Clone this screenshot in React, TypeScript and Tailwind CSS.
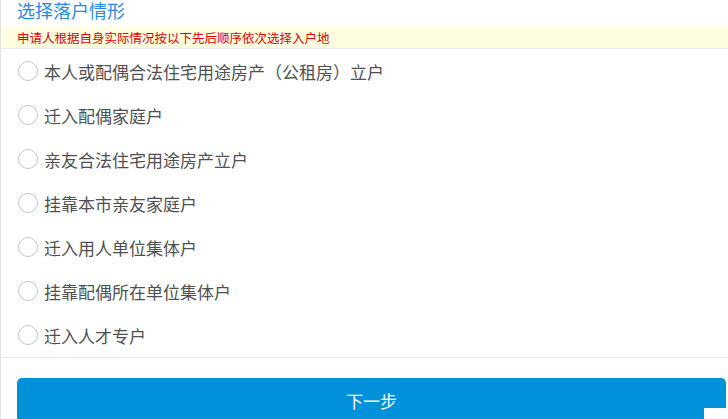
import React, { useState } from 'react';

const options = [
  '本人或配偶合法住宅用途房产（公租房）立户',
  '迁入配偶家庭户',
  '亲友合法住宅用途房产立户',
  '挂靠本市亲友家庭户',
  '迁入用人单位集体户',
  '挂靠配偶所在单位集体户',
  '迁入人才专户',
];

export default function App() {
  const [selected, setSelected] = useState<number | null>(null);

  return (
    <div
      className="relative h-[419px] w-[728px] overflow-hidden border-l border-[#e3e3e3] bg-white"
      style={{ fontFamily: '"Noto Sans CJK SC", "Noto Sans", sans-serif' }}
    >
      {/* 标题 */}
      <div className="h-[24px] pl-[16px]">
        <p className="text-[18px] leading-[20px] text-[#2b8ae2]">选择落户情形</p>
      </div>
      {/* 提示 */}
      <div className="h-[5px] bg-gradient-to-b from-white to-[#fefde0]" />
      <div className="flex h-[20px] items-center border-b border-[#ececec] bg-[#fefde0] pl-[16px]">
        <p className="text-[12.5px] leading-none text-[#e30000]">申请人根据自身实际情况按以下先后顺序依次选择入户地</p>
      </div>
      {/* 选项 */}
      <div className="flex flex-col border-b border-[#e6e6e6]">
        {options.map((label, idx) => (
          <button
            key={label}
            onClick={() => setSelected(idx)}
            className="flex h-[44px] cursor-pointer items-center gap-[6px] pl-[17px] text-left"
          >
            <span className="flex h-[20px] w-[20px] items-center justify-center rounded-full border-[1.5px] border-[#c6c6c6] bg-white">
              {selected === idx && <span className="h-[10px] w-[10px] rounded-full bg-[#0091db]" />}
            </span>
            <span className="text-[17px] leading-none text-[#505050]">{label}</span>
          </button>
        ))}
      </div>
      {/* 下一步 */}
      <div className="pl-[16px] pr-[2px] pt-[20px]">
        <button className="flex h-[46px] w-full items-center justify-center rounded-[5px] bg-[#0091db]">
          <span className="text-[17px] text-white">下一步</span>
        </button>
      </div>
      <div className="absolute bottom-0 right-0 h-[11px] w-[24px] bg-white" />
    </div>
  );
}
